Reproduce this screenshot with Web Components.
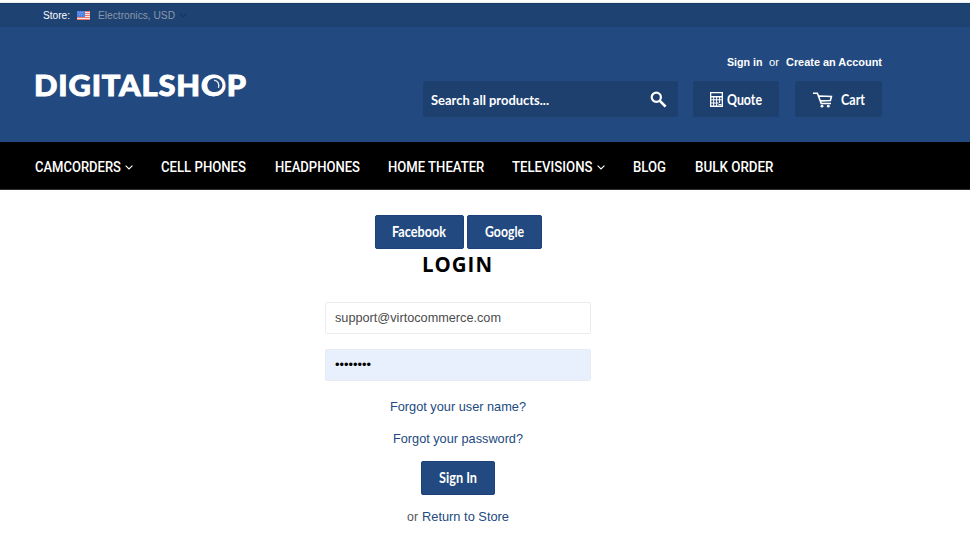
<!DOCTYPE html>
<html lang="en"><head><meta charset="utf-8"><title>Login</title>
<style>html,body{margin:0;height:556px;overflow:hidden;background:#fff;font-family:"Liberation Sans",Arial,sans-serif}</style></head>
<body><shop-page></shop-page>
<script>
// Text run drawn at a fixed width
class FitText extends HTMLElement{
 connectedCallback(){
  if(this.shadowRoot)return;
  this.attachShadow({mode:'open'}).innerHTML='<style>:host{display:block;flex:none;white-space:nowrap}span{display:inline-block;vertical-align:top;transform-origin:0 50%}</style><span><slot></slot></span>';
  const w=+this.getAttribute('w'),s=this.shadowRoot.querySelector('span');
  const n=s.getBoundingClientRect().width;
  this.style.width=w+'px';
  if(n)s.style.transform='scaleX('+w/n+')';
 }}
function define(name,html){
 customElements.define(name,class extends HTMLElement{connectedCallback(){if(!this.shadowRoot)this.attachShadow({mode:'open'}).innerHTML=html}});
}
customElements.define('fit-text',FitText);
define('chevron-icon','<style>:host{display:block;flex:none;width:8px;height:5px}svg{display:block}</style><svg width="8" height="5" viewBox="0 0 8 5"><path d="M.6.7 4 4 7.4.7" fill="none" stroke="currentColor" stroke-width="1.1"/></svg>');
define('store-bar',`<style>
:host{display:flex;align-items:flex-start;height:24px;box-sizing:border-box;padding:7px 0 0 43px;background:#1e4272;border-top:1px solid #1b3b67;font-size:10px;line-height:12px;color:#fff}
.clip{height:9px;overflow:hidden}.clip fit-text{margin-top:-1px}.clip.c{height:10px}
svg{margin:0 8px 0 7px;display:block;flex:none}.c{color:#8a97aa}chevron-icon{width:7px;margin:2px 0 0 4px;color:#17365e}</style>
<div class="clip"><fit-text w="27">Store:</fit-text></div>
<svg width="13" height="9" viewBox="0 0 13 9"><path fill="#fbe3e3" d="M0 0h13v9H0z"/><path stroke="#ee7770" d="M0 .5h13M0 2.5h13M0 4.5h13M0 6.5h13M0 8.5h13"/><path fill="#4d84e4" d="M0 0h8v6H0z"/><path stroke="#79a4f2" stroke-dasharray="1 1" d="M1 1.5h5M2 3.5h4"/></svg>
<div class="clip c"><fit-text w="77">Electronics, USD</fit-text></div><chevron-icon></chevron-icon>`);
define('shop-logo',`<style>:host{display:block;position:relative;width:212px;height:36px;color:#fff;font:900 28.5px/36px Lato,sans-serif}
fit-text{-webkit-text-stroke:.9px #fff;letter-spacing:.8px;margin-left:-1px}
svg{position:absolute;left:169px;top:8px}</style><fit-text w="213">DIGITALSHOP</fit-text>
<svg width="22" height="20" viewBox="0 0 22 20"><ellipse cx="11" cy="10" rx="7.5" ry="7" fill="#224a80"/><path d="M10 5.2Q16 6.3 14.5 12.8" fill="none" stroke="#e8edf5" stroke-width="1.3"/></svg>`);
define('account-links',`<style>:host{display:flex;justify-content:flex-end;gap:7px;color:#fff;font-size:11px;line-height:14px;font-weight:700}.o{font-weight:400}</style>
<fit-text w="35.5">Sign in</fit-text><fit-text class="o" w="10">or</fit-text><fit-text w="96">Create an Account</fit-text>`);
define('search-box',`<style>:host{display:flex;box-sizing:border-box;width:255px;height:36px;padding:0 11px 0 8px;align-items:center;justify-content:space-between;background:#1d406f;border-radius:2px;color:#fff;font:700 13.8px/18px Lato,sans-serif}fit-text{margin-top:1px}</style>
<fit-text w="118">Search all products...</fit-text><svg width="17" height="17" viewBox="0 0 17 17" fill="none" stroke="#fff"><circle cx="6.3" cy="6.3" r="4.6" stroke-width="2.2"/><path d="m9.6 9.6 6 6" stroke-width="2.7"/></svg>`);
define('header-button','<style>:host{display:flex;box-sizing:border-box;height:36px;align-items:center;background:#1d406f;border-radius:2px;color:#fff;font:700 14.2px/18px Lato,sans-serif}</style><slot></slot>');
define('shop-header',`<style>:host{display:flex;box-sizing:border-box;height:115px;padding:0 88px 0 35px;justify-content:space-between;background:#224a80}
shop-logo{margin-top:40px}.right{padding-top:28px}.row{display:flex;margin-top:12px}.q{width:86px;margin-left:15px;padding-left:17px}.c{width:87px;margin-left:16px;padding-left:18px}.q svg{margin-right:4px}.c svg{margin-right:8px}.row fit-text{margin-top:1px}</style>
<shop-logo></shop-logo><div class="right"><account-links></account-links><div class="row"><search-box></search-box>
<header-button class="q"><svg width="13" height="15" viewBox="0 0 13 15" fill="none" stroke="#fff"><path stroke-width="1.4" d="M.6.6h11.8v13.6H.6zM.6 4.8h11.8"/><path d="M.6 7.8h11.8M.6 11h8M3.7 5v9M6.6 5v9M9.6 5v6M8.5 12.5h3"/></svg><fit-text w="35">Quote</fit-text></header-button>
<header-button class="c"><svg width="20" height="17" viewBox="0 0 20 17" fill="none" stroke="#fff"><path stroke-width="1.6" d="M0 2.2h4.4L8.2 12.5H18M6 5l12.4.5-1 4-9.6.4"/><circle cx="9" cy="15.2" r="1.4" fill="#fff" stroke="none"/><circle cx="15.3" cy="15.2" r="1.4" fill="#fff" stroke="none"/></svg><fit-text w="24">Cart</fit-text></header-button>
</div></div>`);
define('shop-nav',`<style>:host{display:flex;box-sizing:border-box;height:48px;padding-left:35px;align-items:center;gap:28.3px;background:#000;border-bottom:1px solid #303030;color:#fff;font:500 15px/20px Roboto,sans-serif}
div{display:flex;align-items:center;gap:4px}chevron-icon{margin-top:3px}fit-text{margin-top:2px}</style>
<div><fit-text w="86">CAMCORDERS</fit-text><chevron-icon></chevron-icon></div><fit-text w="85">CELL PHONES</fit-text><fit-text w="85">HEADPHONES</fit-text><fit-text w="96.3">HOME THEATER</fit-text><div><fit-text w="80.5">TELEVISIONS</fit-text><chevron-icon></chevron-icon></div><fit-text w="33">BLOG</fit-text><fit-text w="78.5">BULK ORDER</fit-text>`);
define('action-button','<style>:host{display:flex;box-sizing:border-box;height:34px;align-items:center;justify-content:center;background:#224a80;border:1px solid #1b427a;border-radius:2px;color:#fff;font:700 14.2px/18px Lato,sans-serif}</style><slot></slot>');
define('text-field','<style>:host{display:flex;box-sizing:border-box;width:266px;height:32px;padding-left:9px;align-items:center;border:1px solid #ececec;border-radius:2px;color:#4c4c4c;font-size:13px;line-height:18px}</style><slot></slot>');
define('login-form',`<style>:host{display:flex;width:266px;margin-left:325px;padding-top:24.5px;flex-direction:column;align-items:center;font-size:13px;line-height:18px;color:#224a80}
.social{display:flex;gap:3px}.f{width:89px}.g{width:75px}h1{margin:0 1px 22.5px 0;height:31px;font:700 20.5px/31px "Open Sans",sans-serif;color:#000}
.pw{margin-top:15px;background:#e8f0fe;border-color:#e7ebf2;color:#000}
.u{margin-top:17px}.p{margin-top:14px}.s{width:74px;margin-top:13px}.r{display:flex;gap:4px;margin-top:12.5px}.or{color:#555}</style>
<div class="social"><action-button class="f"><fit-text w="54">Facebook</fit-text></action-button><action-button class="g"><fit-text w="39">Google</fit-text></action-button></div>
<h1><fit-text w="71" style="letter-spacing:1px">LOGIN</fit-text></h1>
<text-field><fit-text w="166">support@virtocommerce.com</fit-text></text-field>
<text-field class="pw"><fit-text w="36">••••••••</fit-text></text-field>
<fit-text class="u" w="136">Forgot your user name?</fit-text><fit-text class="p" w="130">Forgot your password?</fit-text>
<action-button class="s"><fit-text w="38">Sign In</fit-text></action-button>
<div class="r"><fit-text class="or" w="11">or</fit-text><fit-text w="87">Return to Store</fit-text></div>`);
define('shop-page','<style>:host{display:block;width:970px;height:556px;box-sizing:border-box;padding-top:3px;background:linear-gradient(#fff 1px,#e6e9ee 3px,#fff 3px)}</style><store-bar></store-bar><shop-header></shop-header><shop-nav></shop-nav><login-form></login-form>');
</script></body></html>
